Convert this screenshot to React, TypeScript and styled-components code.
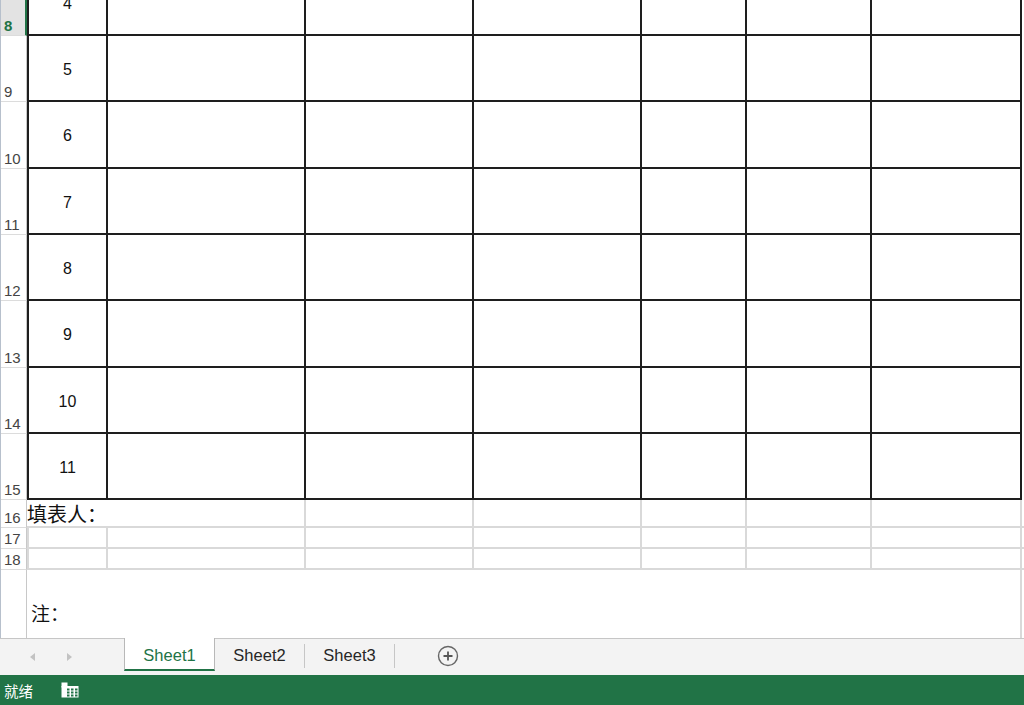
import React, { FC, ReactElement } from 'react';
import styled, { createGlobalStyle } from 'styled-components';

const GREEN = '#217346';
const INK = '#1e1e1e';
const GRID = '#d9d9d9';

// widths of the sheet columns, starting with the row header
const columns = [26, 81, 198, 168, 168, 105, 125, 150];
const track = `${columns[0]}px ${columns.slice(1).map(w => `${w}px`).join(' ')} 1fr`;

const GlobalStyle = createGlobalStyle`
  html, body {
    margin: 0;
    padding: 0;
    background: #ffffff;
    overflow: hidden;
  }
  body {
    font-family: "Liberation Sans", "Noto Sans CJK SC", sans-serif;
  }
`;

const Window = styled.div`
  width: 1024px;
  height: 705px;
  display: flex;
  flex-direction: column;
  background: #ffffff;
`;

const Viewport = styled.div`
  height: 638px;
  overflow: hidden;
  border-left: 1px solid #b7c0cc;
  box-sizing: border-box;
`;

// scrolled: row 8 is partly above the top edge
const Sheet = styled.div`
  margin-top: -30px;
  display: flex;
  flex-direction: column;
`;

const Row = styled.div<{ h: number }>`
  display: grid;
  grid-template-columns: ${track};
  height: ${props => props.h}px;
`;

const RowHead = styled.div<{ active?: boolean }>`
  box-sizing: border-box;
  display: flex;
  align-items: flex-end;
  padding: 0 0 1px 3px;
  font-size: 15px;
  line-height: 16px;
  color: ${props => props.active ? GREEN : '#444444'};
  font-weight: ${props => props.active ? 'bold' : 'normal'};
  background: ${props => props.active ? '#e3e3e3' : '#ffffff'};
  border-right: ${props => props.active ? `2px solid ${GREEN}` : '1px solid #c8c8c8'};
  border-bottom: 1px solid #dcdcdc;
`;

const Cell = styled.div<{ first?: boolean; boxed?: boolean }>`
  box-sizing: border-box;
  display: flex;
  align-items: center;
  justify-content: center;
  padding-top: 3px;
  font-size: 16px;
  color: #111111;
  border-left: ${props => props.first ? `2px solid ${props.boxed ? INK : GRID}` : 'none'};
  border-right: 2px solid ${props => props.boxed ? INK : GRID};
  border-bottom: 2px solid ${props => props.boxed ? INK : GRID};
`;

const Rest = styled.div<{ boxed?: boolean }>`
  border-bottom: 2px solid ${props => props.boxed ? '#ffffff' : GRID};
`;

const Label = styled.div`
  grid-column: span 2;
  box-sizing: border-box;
  display: flex;
  align-items: flex-start;
  padding-top: 3px;
  font-family: "Noto Sans CJK SC", sans-serif;
  font-size: 20px;
  line-height: 22px;
  color: #111111;
  border-right: 2px solid ${GRID};
  border-bottom: 2px solid ${GRID};
`;

const NoteRow = styled.div`
  display: grid;
  grid-template-columns: ${columns[0]}px 1fr 2px;
  height: 80px;
`;

const NoteHead = styled.div`
  border-right: 1px solid #c8c8c8;
`;

const Note = styled.div`
  font-family: "Noto Sans CJK SC", sans-serif;
  font-size: 19px;
  line-height: 22px;
  padding: 32px 0 0 4px;
  color: #111111;
`;

const NoteEdge = styled.div`
  width: 2px;
  background: ${GRID};
  margin-left: -2px;
`;

const TabBar = styled.div`
  height: 37px;
  box-sizing: border-box;
  border-top: 1px solid #c6c6c6;
  background: #f3f3f3;
  display: flex;
  align-items: stretch;
`;

const Nav = styled.div`
  width: 124px;
  display: flex;
  align-items: center;
  gap: 30px;
  padding-left: 29px;
  box-sizing: border-box;
`;

const Arrow = styled.span<{ dir: 'left' | 'right' }>`
  width: 0;
  height: 0;
  border-top: 4px solid transparent;
  border-bottom: 4px solid transparent;
  border-${props => props.dir === 'left' ? 'right' : 'left'}: 5px solid #c2c2c2;
  margin: 0 1px;
`;

const Tab = styled.div<{ active?: boolean }>`
  width: ${props => props.active ? 91 : 89}px;
  box-sizing: border-box;
  display: flex;
  align-items: center;
  justify-content: center;
  font-family: "Liberation Sans", sans-serif;
  font-size: 16.5px;
  padding-top: 3px;
  color: ${props => props.active ? GREEN : '#262626'};
  background: ${props => props.active ? '#ffffff' : 'transparent'};
  border-left: ${props => props.active ? '1px solid #b8b8b8' : 'none'};
  border-right: ${props => props.active ? '1px solid #b8b8b8' : 'none'};
  border-bottom: ${props => props.active ? `2px solid ${GREEN}` : '2px solid transparent'};
  margin-bottom: 4px;
  margin-top: -1px;
`;

const Divider = styled.div`
  width: 1px;
  background: #c6c6c6;
  margin: 5px 0 7px;
`;

const AddSheet = styled.div`
  display: flex;
  align-items: center;
  padding: 0 0 2px 42px;
`;

const StatusBar = styled.div`
  height: 30px;
  background: ${GREEN};
  display: flex;
  align-items: center;
  gap: 28px;
  padding-left: 4px;
  color: #ffffff;
  font-family: "Noto Sans CJK SC", sans-serif;
  font-size: 14.5px;
`;

const mainRows = [
  { num: 8, val: '4', h: 66 },
  { num: 9, val: '5', h: 66 },
  { num: 10, val: '6', h: 67 },
  { num: 11, val: '7', h: 66 },
  { num: 12, val: '8', h: 66 },
  { num: 13, val: '9', h: 67 },
  { num: 14, val: '10', h: 66 },
  { num: 15, val: '11', h: 66 },
];

const dataCols = columns.length - 1;

const BoxedRow: FC<{ num: number; val: string; h: number }> = ({ num, val, h }): ReactElement => (
  <Row h={h}>
    <RowHead active={num === 8}>{num}</RowHead>
    {Array.from({ length: dataCols }).map((_, i) => (
      <Cell key={i} boxed first={i === 0}>{i === 0 ? val : ''}</Cell>
    ))}
    <Rest boxed />
  </Row>
);

const PlainRow: FC<{ num: number; h: number }> = ({ num, h }): ReactElement => (
  <Row h={h}>
    <RowHead>{num}</RowHead>
    {Array.from({ length: dataCols }).map((_, i) => (
      <Cell key={i} first={i === 0} />
    ))}
    <Rest />
  </Row>
);

const PlusCircle: FC = (): ReactElement => (
  <svg width="22" height="22" viewBox="0 0 22 22">
    <circle cx="11" cy="11" r="9.5" fill="none" stroke="#666666" strokeWidth="1.4" />
    <path d="M11 6.5v9M6.5 11h9" stroke="#555555" strokeWidth="1.8" />
  </svg>
);

const SheetIcon: FC = (): ReactElement => (
  <svg width="18" height="16" viewBox="0 0 18 16">
    <rect x="0.5" y="0.5" width="6" height="5" fill="#ffffff" />
    <rect x="0.5" y="4" width="17" height="11.5" fill="#ffffff" />
    <g fill={GREEN}>
      {[0, 1, 2].map(r => [0, 1, 2].map(c => (
        <rect key={`${r}-${c}`} x={6 + c * 4} y={6.5 + r * 3} width="2.5" height="2" />
      )))}
    </g>
  </svg>
);

const App: FC = (): ReactElement => (
  <Window>
    <GlobalStyle />
    <Viewport>
      <Sheet>
        {mainRows.map(r => <BoxedRow key={r.num} {...r} />)}
        <Row h={28}>
          <RowHead>16</RowHead>
          <Label>填表人：</Label>
          {Array.from({ length: dataCols - 2 }).map((_, i) => <Cell key={i} />)}
          <Rest />
        </Row>
        <PlainRow num={17} h={21} />
        <PlainRow num={18} h={21} />
        <NoteRow>
          <NoteHead />
          <Note>注：</Note>
          <NoteEdge />
        </NoteRow>
      </Sheet>
    </Viewport>
    <TabBar>
      <Nav>
        <Arrow dir="left" />
        <Arrow dir="right" />
      </Nav>
      <Tab active>Sheet1</Tab>
      <Tab>Sheet2</Tab>
      <Divider />
      <Tab>Sheet3</Tab>
      <Divider />
      <AddSheet>
        <PlusCircle />
      </AddSheet>
    </TabBar>
    <StatusBar>
      <span>就绪</span>
      <SheetIcon />
    </StatusBar>
  </Window>
);

export default App;
